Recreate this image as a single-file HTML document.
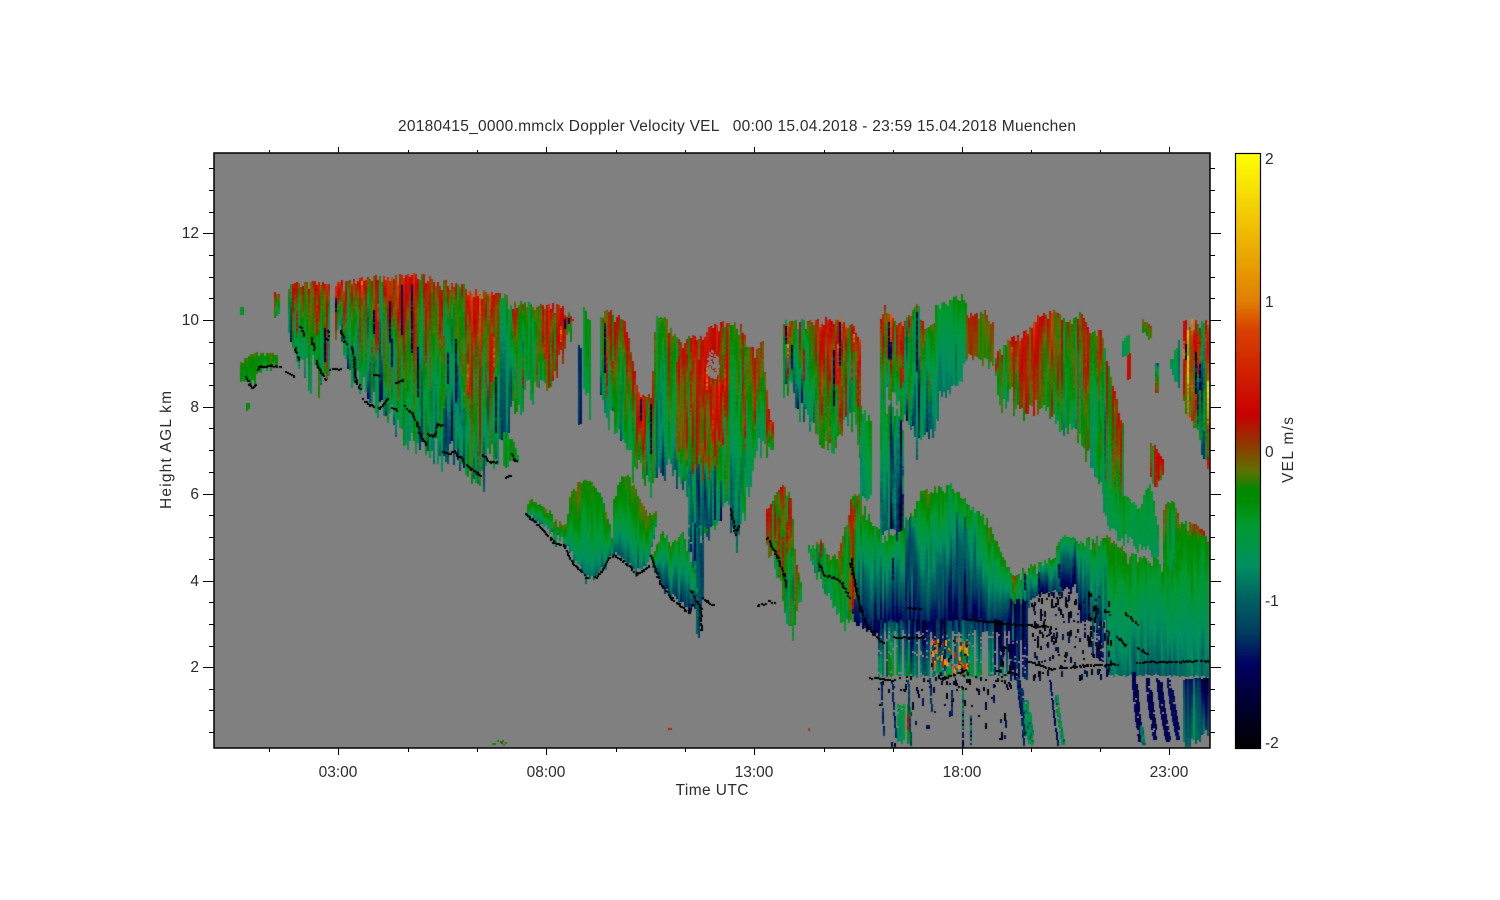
<!DOCTYPE html>
<html><head><meta charset="utf-8">
<style>
html,body{margin:0;padding:0;background:#fff;width:1500px;height:900px;overflow:hidden}
canvas,svg{position:absolute;left:0;top:0}
text{font-family:"Liberation Sans",sans-serif;font-size:15.5px;fill:#2c2c2c;white-space:pre}
</style></head>
<body>
<canvas id="c" width="1500" height="900"></canvas>
<svg width="1500" height="900" viewBox="0 0 1500 900">
<defs><linearGradient id="g" x1="0" y1="0" x2="0" y2="1">
<stop offset="0" stop-color="#ffff00"/><stop offset=".247" stop-color="#e08000"/><stop offset=".297" stop-color="#d84000"/><stop offset=".44" stop-color="#c80000"/><stop offset=".482" stop-color="#983000"/><stop offset=".533" stop-color="#607000"/><stop offset=".566" stop-color="#008800"/><stop offset=".583" stop-color="#008c00"/><stop offset=".625" stop-color="#009a30"/><stop offset=".692" stop-color="#009060"/><stop offset=".751" stop-color="#006060"/><stop offset=".801" stop-color="#004060"/><stop offset=".86" stop-color="#000060"/><stop offset=".902" stop-color="#000040"/><stop offset="1" stop-color="#000000"/>
</linearGradient></defs>
<rect x="214" y="153" width="996" height="595" fill="none" stroke="#000" stroke-width="1.5"/>
<rect x="1235.5" y="153.5" width="25" height="595" fill="url(#g)" stroke="#000" stroke-width="1.2"/>
<path fill="none" stroke="#000" stroke-width="1" d="M203 233.5H214M203 320.5H214M203 407.5H214M203 494.5H214M203 581.5H214M203 667.5H214M1210 233.5H1221M1210 320.5H1221M1210 407.5H1221M1210 494.5H1221M1210 581.5H1221M1210 667.5H1221
M209 168.5H214M209 190.5H214M209 212.5H214M209 255.5H214M209 277.5H214M209 298.5H214M209 342.5H214M209 363.5H214M209 385.5H214M209 428.5H214M209 450.5H214M209 472.5H214M209 515.5H214M209 537.5H214M209 559.5H214M209 602.5H214M209 624.5H214M209 646.5H214M209 689.5H214M209 710.5H214M209 732.5H214
M1210 168.5H1215M1210 190.5H1215M1210 212.5H1215M1210 255.5H1215M1210 277.5H1215M1210 298.5H1215M1210 342.5H1215M1210 363.5H1215M1210 385.5H1215M1210 428.5H1215M1210 450.5H1215M1210 472.5H1215M1210 515.5H1215M1210 537.5H1215M1210 559.5H1215M1210 602.5H1215M1210 624.5H1215M1210 646.5H1215M1210 689.5H1215M1210 710.5H1215M1210 732.5H1215
M338.5 147V153M546.5 147V153M754.5 147V153M962.5 147V153M1169.5 147V153M338.5 748V755M546.5 748V755M754.5 748V755M962.5 748V755M1169.5 748V755
M269.5 150V153M408.5 150V153M477.5 150V153M616.5 150V153M685.5 150V153M824.5 150V153M893.5 150V153M1031.5 150V153M1100.5 150V153
M269.5 748V752M408.5 748V752M477.5 748V752M616.5 748V752M685.5 748V752M824.5 748V752M893.5 748V752M1031.5 748V752M1100.5 748V752"/>
<text x="398" y="131" textLength="678">20180415_0000.mmclx Doppler Velocity VEL   00:00 15.04.2018 - 23:59 15.04.2018 Muenchen</text>
<g text-anchor="middle">
<text x="338" y="777">03:00</text><text x="546" y="777">08:00</text><text x="754" y="777">13:00</text><text x="962" y="777">18:00</text><text x="1169" y="777">23:00</text>
<text x="712" y="795" textLength="73">Time UTC</text>
<text transform="translate(171 450) rotate(-90)" textLength="118">Height AGL km</text>
<text transform="translate(1293 450) rotate(-90)" textLength="66">VEL m/s</text>
</g>
<g text-anchor="end">
<text x="199" y="238">12</text><text x="199" y="325">10</text><text x="199" y="412">8</text><text x="199" y="499">6</text><text x="199" y="586">4</text><text x="199" y="672">2</text>
</g>
<text x="1265" y="164">2</text><text x="1265" y="307">1</text><text x="1265" y="457">0</text><text x="1265" y="606">-1</text><text x="1265" y="748">-2</text>
</svg>
<script>
(function(){
var c=document.getElementById('c').getContext('2d');
var seed=12345;
function r(){seed|=0;seed=seed+0x6D2B79F5|0;var t=Math.imul(seed^seed>>>15,1|seed);t=t+Math.imul(t^t>>>7,61|t)^t;return((t^t>>>14)>>>0)/4294967296;}
function g(){return (r()+r()+r()-1.5)*1.15;}
var st=[[-2,0,0,0],[-1.6,0,0,64],[-1.45,0,0,96],[-1.2,0,64,96],[-1,0,96,96],[-.77,0,144,96],[-.5,0,154,48],[-.33,0,140,0],[-.27,0,136,0],[-.13,96,112,0],[.07,152,48,0],[.23,200,0,0],[.8,216,64,0],[1,224,128,0],[2,255,255,0]];
function col(v){if(v<-2)v=-2;if(v>2)v=2;for(var i=1;i<st.length;i++){if(v<=st[i][0]){var a=st[i-1],b=st[i],t=(v-a[0])/(b[0]-a[0]);return 'rgb('+Math.round(a[1]+(b[1]-a[1])*t)+','+Math.round(a[2]+(b[2]-a[2])*t)+','+Math.round(a[3]+(b[3]-a[3])*t)+')';}}return '#ff0';}
function ip(p,x){if(x<=p[0])return p[1];for(var i=2;i<p.length;i+=2){if(x<=p[i]){var t=(x-p[i-2])/(p[i]-p[i-2]);return p[i-1]+(p[i+1]-p[i-1])*t;}}return p[p.length-1];}
c.fillStyle='#808080';c.fillRect(214,153,996,595);
c.beginPath();c.rect(215,154,994,593);c.clip();
function b(T,B,s){
 var x0=Math.max(T[0],B[0]),x1=Math.min(T[T.length-2],B[B.length-2]);
 var vt=s.vt,vb=s.vb,a=s.a||.2,h=s.h||0,k=s.k||0,j=s.j||6,p=s.p||.75,jt=s.jt===undefined?7:s.jt,ph=r()*6;
 for(var x=x0;x<=x1;x+=2){
  var t=ip(T,x)+r()*r()*jt*1.8-jt*.25,bb=ip(B,x)-r()*j;
  if(r()<.15&&j>5)bb+=r()*j*.9;
  var n=g()*a,n2=g()*a*.7,lf=Math.sin(x*.09+ph)*a*.5,hot=r()<h,dark=r()<k,hs=r()*.5,he=hs+.15+r()*.35,hole=s.hy&&r()<(s.hp||.35);
  for(var y=t;y<bb;y+=2){
   var d=(y-t)/Math.max(bb-t,1);
   if(d<0)d=0;
   if(s.hy&&y>s.hy&&(hole||r()<.1))continue;
   var v=vt+(vb-vt)*Math.pow(d,p)+n+lf+n2*Math.sin(y/15+x)+g()*a*.15;
   if(hot&&d>hs&&d<he)v+=.4+r()*.35;
   if(dark&&d>hs&&d<he)v=-1.45+g()*.25;
   c.fillStyle=col(v);c.fillRect(Math.round(x),Math.round(y),2,2);
  }
 }
}
function st1(x0,y0,x1,y1,w,v,a){for(var y=y0;y<y1;y+=2){var t=(y-y0)/(y1-y0),x=x0+(x1-x0)*t,ww=w*(.6+.4*Math.sin(t*3.14));for(var q=-ww/2;q<ww/2;q+=2){if(r()<.92){c.fillStyle=col(v+g()*(a||.15));c.fillRect(Math.round(x+q),Math.round(y),2,2);}}}}

/* far-left fragments */
b([240,362,250,354,262,352,277,355],[240,385,250,385,262,372,277,366],{vt:-.2,vb:-.42,a:.1,j:6,jt:4});
b([274,293,279,295],[274,318,279,316],{vt:.15,vb:-.35,a:.3,j:4,jt:3});
b([240,307,242,307],[240,315,242,315],{vt:-.4,vb:-.4,a:.03,j:2,jt:0});
b([246,403,248,403],[246,410,248,410],{vt:-.35,vb:-.35,a:.03,j:2,jt:0});
/* B */
b([288,286,300,283,315,283,328,285],[288,350,295,365,300,383,315,378,320,395,325,392,330,372],{vt:.22,vb:-.55,a:.42,h:.12,k:.06,j:26});
/* C */
b([335,283,360,278,400,275,420,275,440,280,470,288,490,293,503,296],[335,340,347,387,363,400,377,420,400,445,420,460,437,468,457,470,477,500,487,473,497,467,503,462],{vt:.3,vb:-.8,a:.42,h:.14,k:.1,j:30,p:.8});
b([500,296,506,296,509,310],[500,430,506,465,509,430],{vt:-.55,vb:-1.25,a:.3,j:18});
b([510,305,520,302,540,305,560,305,570,315,574,322],[510,415,520,420,527,395,535,395,550,395,562,365,570,345,574,325],{vt:.15,vb:-.3,a:.4,h:.1,k:.05,j:22});
b([503,430,512,440,517,455],[503,470,512,462,517,465],{vt:-.55,vb:-.45,a:.25,j:6,jt:3});
/* D */
b([578,345,580,345],[578,425,580,425],{vt:-1.2,vb:-1.3,a:.1,j:4,jt:2});
b([583,308,590,315],[583,405,590,405],{vt:-.4,vb:-.7,a:.2,j:18});
/* E */
b([600,310,610,312,625,320,632,360,640,397,650,395,655,317,665,318,672,333,680,343,690,335,698,340,706,330,712,325,725,322,740,325,748,345,755,350,762,340,768,410,772,420],
  [600,410,612,425,620,450,635,470,645,490,650,495,660,480,668,470,675,480,685,495,690,530,697,540,705,540,715,530,725,505,730,525,736,553,742,513,750,490,755,450,765,460,772,458],
  {vt:.05,vb:-.72,a:.36,h:.1,k:.02,j:18,p:1.1});
b([676,360,695,350,712,385,722,380],[676,460,695,470,712,470,722,440],{vt:.3,vb:.0,a:.32,h:.08,j:20,jt:14});
for(var i=0;i<110;i++){c.fillStyle='#808080';var a1=r()*6.3,a2=Math.sqrt(r());c.fillRect(Math.round(712+Math.cos(a1)*a2*6),Math.round(364+Math.sin(a1)*a2*14),2,2);}
b([688,470,700,465,720,470],[688,560,697,570,705,540,720,525],{vt:-.8,vb:-1.25,a:.32,j:14,hy:525,jt:14});
b([692,520,696,530,702,540],[692,590,697,647,702,600],{vt:-.9,vb:-1,a:.3,h:.1,j:6});
/* F */
b([523,508,530,500,545,505,555,520,565,525,570,492,580,480,590,481,600,495,608,520,613,545],[523,513,543,530,563,545,577,567,588,583,600,573,613,555],{vt:-.2,vb:-.9,a:.12,j:8,p:1.5,jt:5});
b([613,495,622,473,632,480,642,505,650,515,655,512],[613,555,635,573,648,565,655,530],{vt:-.2,vb:-1,a:.12,j:6,p:1.4,jt:5});
b([650,557,657,540,663,530,670,543,682,533,692,567,697,593],[650,560,653,570,663,590,677,603,690,613,697,593],{vt:-.35,vb:-1.25,a:.16,k:.04,j:6,p:1.1,jt:5});
/* G */
b([766,510,775,495,782,485,790,495,792,520,795,560,802,590],[766,545,775,570,780,590,785,625,792,640,797,610,802,595],{vt:.0,vb:-.4,a:.36,h:.15,j:12});
/* H */
b([808,545,820,540,830,560,838,550,846,520,852,495,860,495],[808,560,815,575,830,605,842,625,852,622,860,620],{vt:-.2,vb:-.6,a:.25,h:.08,j:10});
/* I */
b([783,322,790,318,810,322,825,318,840,320,855,325,860,340],[783,395,790,398,803,427,815,440,825,460,835,458,845,430,855,430,860,480],{vt:.22,vb:-.55,a:.45,h:.13,k:.1,j:22});
b([860,405,870,420],[860,500,870,500],{vt:-.5,vb:-.8,a:.15,j:8});
/* Q1 */
b([850,495,860,500,870,520,883,537,900,533,920,493,937,487,950,485,967,503,987,520,1003,560,1012,575],[850,617,873,640,880,628,1012,628],{vt:-.35,vb:-1.5,a:.17,k:.02,j:6,p:1.05,jt:8});
b([905,520,915,520],[905,625,915,625],{vt:-.9,vb:-1.5,a:.22,j:6,jt:14});
b([956,515,968,520],[956,625,968,625],{vt:-.85,vb:-1.5,a:.22,j:6,jt:14});
b([878,620,1012,620],[878,677,1012,677],{vt:-1.35,vb:-.75,a:.33,j:3,p:1,hy:630,hp:.22,jt:3});
b([850,495,855,510],[850,620,855,600],{vt:.2,vb:.0,a:.35,j:10});
/* column */
b([880,400,892,400,902,420],[880,540,892,540,902,540],{vt:-.4,vb:-1.05,a:.5,h:.12,k:.12,j:14,jt:20});
/* J */
b([880,310,885,305,895,325,905,320,917,303,925,330,935,320],[880,407,893,400,903,427,920,457,933,440,935,420],{vt:.15,vb:-.75,a:.48,h:.16,k:.14,j:20});
b([935,305,950,298,963,295,966,310],[935,420,940,400,953,397,966,370],{vt:-.4,vb:-.85,a:.12,j:14});
b([966,315,975,312,985,312,993,325],[966,367,980,370,993,367],{vt:.05,vb:-.1,a:.18,j:16});
/* L, M */
b([993,357,1007,340,1027,330,1037,317,1053,310,1067,323,1080,313,1090,333],[993,370,998,417,1010,403,1023,420,1043,413,1060,440,1073,437,1090,467],{vt:.2,vb:-.3,a:.33,h:.1,j:18});
b([1090,333,1100,330,1110,377,1123,427],[1090,467,1100,490,1110,520,1125,500],{vt:.1,vb:-.5,a:.4,k:.06,h:.08,j:12});
/* Q2, Q3, Q4 */
b([1012,575,1027,567,1050,560,1060,537],[1012,640,1030,600,1060,595],{vt:-.25,vb:-1.25,a:.2,j:8,k:.06,jt:9});
b([1060,537,1083,540,1107,537],[1060,590,1075,590,1085,650,1110,675],{vt:-.35,vb:-1.45,a:.2,j:8,k:.05,hy:620,p:.75,jt:9});
b([1103,480,1115,490,1130,500,1138,510,1145,490,1150,485,1158,530],[1103,520,1115,540,1130,545,1140,550,1158,560],{vt:-.45,vb:-.65,a:.12,j:10});
b([1163,505,1172,500,1180,520,1195,525,1210,535],[1163,570,1210,570],{vt:-.05,vb:-.5,a:.3,h:.08,j:2});
b([1107,537,1127,553,1150,558,1173,565,1183,530,1210,537],[1107,675,1210,677],{vt:-.3,vb:-.98,a:.13,k:.02,j:2,p:.9,jt:9});
b([1010,600,1027,600],[1010,680,1027,680],{vt:-1.3,vb:-1.1,a:.25,j:4,hy:640,hp:.2});
/* small right */
b([1150,443,1155,445,1162,460],[1150,480,1155,487,1162,475],{vt:.25,vb:.1,a:.4,j:4,jt:4});
b([1170,360,1178,340],[1170,375,1178,392],{vt:-.55,vb:-.7,a:.2,j:8,jt:4});
b([1155,363,1158,363],[1155,393,1158,393],{vt:-1,vb:.2,a:.4,j:3,jt:2});
b([1127,353,1130,353],[1127,380,1130,380],{vt:.25,vb:.15,a:.12,j:3,jt:2});
b([1140,318,1150,325],[1142,332,1150,340],{vt:.0,vb:-.25,a:.15,j:3,jt:3});
b([1122,340,1128,335],[1122,360,1128,355],{vt:-.5,vb:-.6,a:.15,j:4,jt:3});
b([1183,322,1195,320,1208,322,1210,322],[1183,405,1190,420,1195,430,1200,455,1205,465,1210,475],{vt:.35,vb:-.3,a:.72,h:.3,k:.28,j:12});

/* speckle on grey */
function sp(x0,y0,x1,y1,n,cols,m){for(var i=0;i<n;i++){var x=x0+r()*(x1-x0),y=y0+r()*(y1-y0),hh=2+Math.floor(r()*(m||4))*2;c.fillStyle=cols[Math.floor(r()*cols.length)];c.fillRect(Math.round(x),Math.round(y),2,hh);}}
sp(1030,590,1110,675,190,['#000','#000030','#001040','#000'],3);
sp(878,678,1010,745,45,['#000030','#001050','#000']);
sp(878,675,1012,690,55,['#000','#000030'],2);
sp(1000,640,1012,680,20,['#000','#000030']);
/* lower streaks */
st1(1018,678,1026,735,5,-1.35,.2);st1(1025,700,1031,745,7,-.75,.3);
st1(1020,700,1024,745,2,-1.3,.1);
st1(1050,680,1058,745,2,-1.4,.1);st1(1056,695,1063,745,4,-.7,.4);
st1(1133,672,1140,742,5,-1.5,.12);st1(1141,725,1143,745,3,-.9,.2);
st1(1147,678,1155,740,5,-1.5,.1);st1(1158,678,1168,742,6,-1.5,.1);st1(1168,678,1178,740,5,-1.45,.1);
b([1183,678,1210,678],[1183,748,1195,745,1207,735,1210,700],{vt:-1.35,vb:-.95,a:.22,j:8,jt:2});
b([897,705,910,705],[897,743,910,745],{vt:-.5,vb:-.6,a:.2,h:.06,j:4,hy:700,hp:.25,jt:3});
st1(881,680,884,735,2,-1.3,.1);st1(892,680,896,738,2,-1.3,.1);st1(908,680,911,745,2,-1.2,.1);st1(930,678,932,712,2,-1.3,.1);st1(971,715,971,745,2,-1.0,.6);st1(963,690,963,730,2,-.9,.8);st1(952,690,952,716,2,-1.3,.1);
/* tiny bottom bits */
sp(490,740,508,744,8,['#008c00','#c80000','#009a30'],1);
sp(666,727,670,729,2,['#c02000'],1);sp(806,727,810,729,2,['#c03000'],1);
/* orange zone */
for(var i=0;i<80;i++){var xs=[933,936,941,950,955,963,966,945,958][Math.floor(r()*9)]+Math.floor(r()*4)-2,yy=638+r()*36;c.fillStyle=['#e08000','#e06000','#c80000','#ff9000','#d02000','#808080','#000030'][Math.floor(r()*7)];c.fillRect(xs,Math.round(yy),2,2+Math.floor(r()*3)*2);}
/* black lines */
function ln(ox,oy,p,sc){for(var i=0;i<p.length-2;i+=2){var ax=p[i]*sc+ox,ay=p[i+1]*sc+oy,bx=p[i+2]*sc+ox,by=p[i+3]*sc+oy,L=Math.hypot(bx-ax,by-ay),n=Math.max(1,Math.round(L/1.5));for(var q=0;q<=n;q++){if(r()<.08)continue;var t=q/n;c.fillStyle='#000';c.fillRect(Math.round(ax+(bx-ax)*t+g()*.8),Math.round(ay+(by-ay)*t+g()*.8),2,2);}}}
var Z=1/3;
var z4=[[45,350,55,370,65,380,75,372],[78,325,90,316,120,316,150,318],[165,333,190,348],[190,260,205,295],[255,300,285,358],[300,325,330,325],[330,210,345,250],[365,260,370,300,375,360,390,385],[395,415,430,440],[445,445,470,415],[485,440,500,450],[520,435,545,460,560,490,570,530,585,550],[590,520,610,525,620,490,635,495],[635,570,655,578,670,570,695,600,720,625,750,645],[755,580,780,605,800,605],[845,580,850,600,858,600],[825,650,840,645],[430,340,445,345],[495,365,520,360],[210,200,220,225],[240,225,250,265],[295,210,290,240]];
z4.forEach(function(p){ln(230,260,p,Z);});
var z5=[[75,640,130,690,160,725,190,735,205,770,230,800,260,830],[285,830,310,800,325,770,345,765,385,795,410,820,445,795],[450,765,480,850,510,890,545,920,565,935,575,910],[570,870,600,920,600,990],[605,890,635,915],[690,620,705,700,715,675],[800,710,830,770,850,820,855,860],[770,915,795,910],[805,900,825,908],[955,790,970,825,1000,830,1025,850,1045,890],[1050,775,1080,930]];
z5.forEach(function(p){ln(500,300,p,Z);});
var z3=[[0,250,30,390,50,440,100,490],[130,470,220,470],[170,380,210,385],[345,415,480,430,590,437],[530,540,600,565,700,555,800,550],[860,545,1080,540],[820,395,860,430],[800,470,825,495],[860,500,890,520],[60,590,130,600],[270,595,340,570],[440,570,500,580]];
z3.forEach(function(p){ln(850,480,p,Z);});
})();
</script>
</body></html>
